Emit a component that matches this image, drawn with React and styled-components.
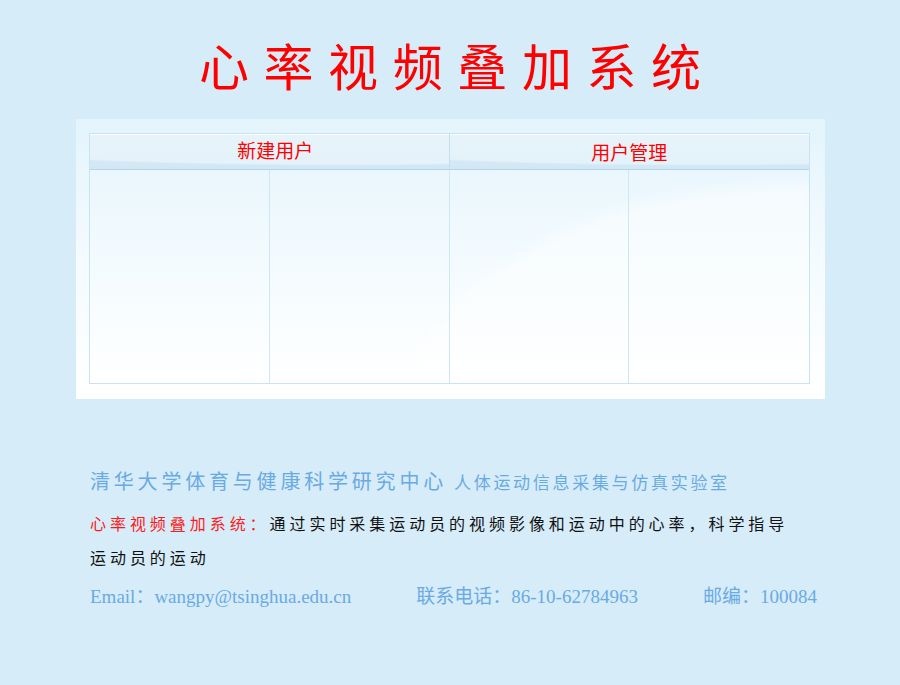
import styled, { createGlobalStyle } from "styled-components";

const GlobalStyle = createGlobalStyle`
  html, body {
    margin: 0;
    padding: 0;
    background: #d6ecf8;
  }
  body {
    font-family: "Liberation Sans", "Noto Sans CJK SC", sans-serif;
  }
`;

const columns = ["", "", "", ""];

export default function App() {
  return (
    <Page>
      <GlobalStyle />
      <Title>心率视频叠加系统</Title>

      <Panel>
        <Grid>
          <HeadCell $shift={12} $lift={4}>
            新建用户
          </HeadCell>
          <HeadCell $shift={0} $lift={0} $last>
            用户管理
          </HeadCell>
          {columns.map((c, i) => (
            <BodyCell key={i} $last={i === columns.length - 1} />
          ))}
        </Grid>
      </Panel>

      <Footer>
        <Org>
          清华大学体育与健康科学研究中心
          <Lab>人体运动信息采集与仿真实验室</Lab>
        </Org>
        <Desc>
          <Red>心率视频叠加系统：</Red>
          通过实时采集运动员的视频影像和运动中的心率，科学指导运动员的运动
        </Desc>
        <Contact>
          <span>Email：wangpy@tsinghua.edu.cn</span>
          <span>联系电话：86-10-62784963</span>
          <span>邮编：100084</span>
        </Contact>
      </Footer>
    </Page>
  );
}

const Page = styled.div`
  width: 900px;
  height: 685px;
  padding-top: 33px;
  box-sizing: border-box;
  background: #d6ecf8;
`;

const Title = styled.h1`
  margin: 0;
  text-align: center;
  font-family: "Noto Sans CJK SC", sans-serif;
  font-weight: 400;
  font-size: 50px;
  line-height: 62px;
  letter-spacing: 14.6px;
  padding-left: 14.6px;
  color: #ff0000;
`;

const Panel = styled.div`
  width: 749px;
  height: 280px;
  margin: 24px 0 0 76px;
  padding: 14px 15px 15px 13px;
  box-sizing: border-box;
  background: linear-gradient(180deg, #e3f4fc 0%, #f3fafe 45%, #ffffff 100%);
`;

const Grid = styled.div`
  display: grid;
  grid-template-columns: repeat(4, 1fr);
  grid-template-rows: 36px 1fr;
  height: 100%;
  border: 1px solid #c8e4f2;
  box-sizing: border-box;
  background:
    radial-gradient(ellipse 640px 380px at 98% 112%, rgba(255, 255, 255, 0.45) 58%, rgba(255, 255, 255, 0) 62%),
    linear-gradient(180deg, #e6f5fd 0%, #f4fbfe 55%, #ffffff 100%);
`;

const HeadCell = styled.div`
  grid-column: span 2;
  display: flex;
  align-items: center;
  justify-content: center;
  padding-left: ${(p) => p.$shift}px;
  padding-bottom: ${(p) => p.$lift}px;
  font-family: "Noto Sans CJK SC", sans-serif;
  font-size: 19px;
  color: #ff0000;
  border-right: ${(p) => (p.$last ? "none" : "1px solid #c4e0f0")};
  border-bottom: 1px solid #b5d6ea;
  background:
    radial-gradient(ellipse 900px 60px at 70% 0%, rgba(235, 246, 252, 0.7) 50%, rgba(235, 246, 252, 0) 53%),
    linear-gradient(180deg, #dcedf7 0%, #d2e7f4 100%);
  box-shadow: inset 0 1px 0 #ffffff;
`;

const BodyCell = styled.div`
  border-right: ${(p) => (p.$last ? "none" : "1px solid #cfe7f3")};
`;

const Footer = styled.div`
  width: 712px;
  margin: 67px 0 0 90px;
`;

const Org = styled.div`
  display: flex;
  align-items: baseline;
  height: 34px;
  font-family: "Noto Sans CJK SC", sans-serif;
  font-size: 20px;
  letter-spacing: 3.8px;
  color: #6aaae4;
  white-space: nowrap;
`;

const Lab = styled.span`
  margin-left: 7px;
  font-size: 17px;
  letter-spacing: 2.7px;
`;

const Desc = styled.p`
  margin: 8px 0 0;
  font-family: "Liberation Serif", "Noto Sans CJK SC", serif;
  font-size: 16px;
  line-height: 34px;
  letter-spacing: 3.95px;
  color: #111111;
`;

const Red = styled.span`
  color: #ff1a1a;
`;

const Contact = styled.div`
  display: flex;
  gap: 65px;
  margin-top: 4px;
  font-family: "Liberation Serif", "Noto Sans CJK SC", serif;
  font-size: 19px;
  line-height: 34px;
  color: #6aaae4;
  white-space: nowrap;
`;
